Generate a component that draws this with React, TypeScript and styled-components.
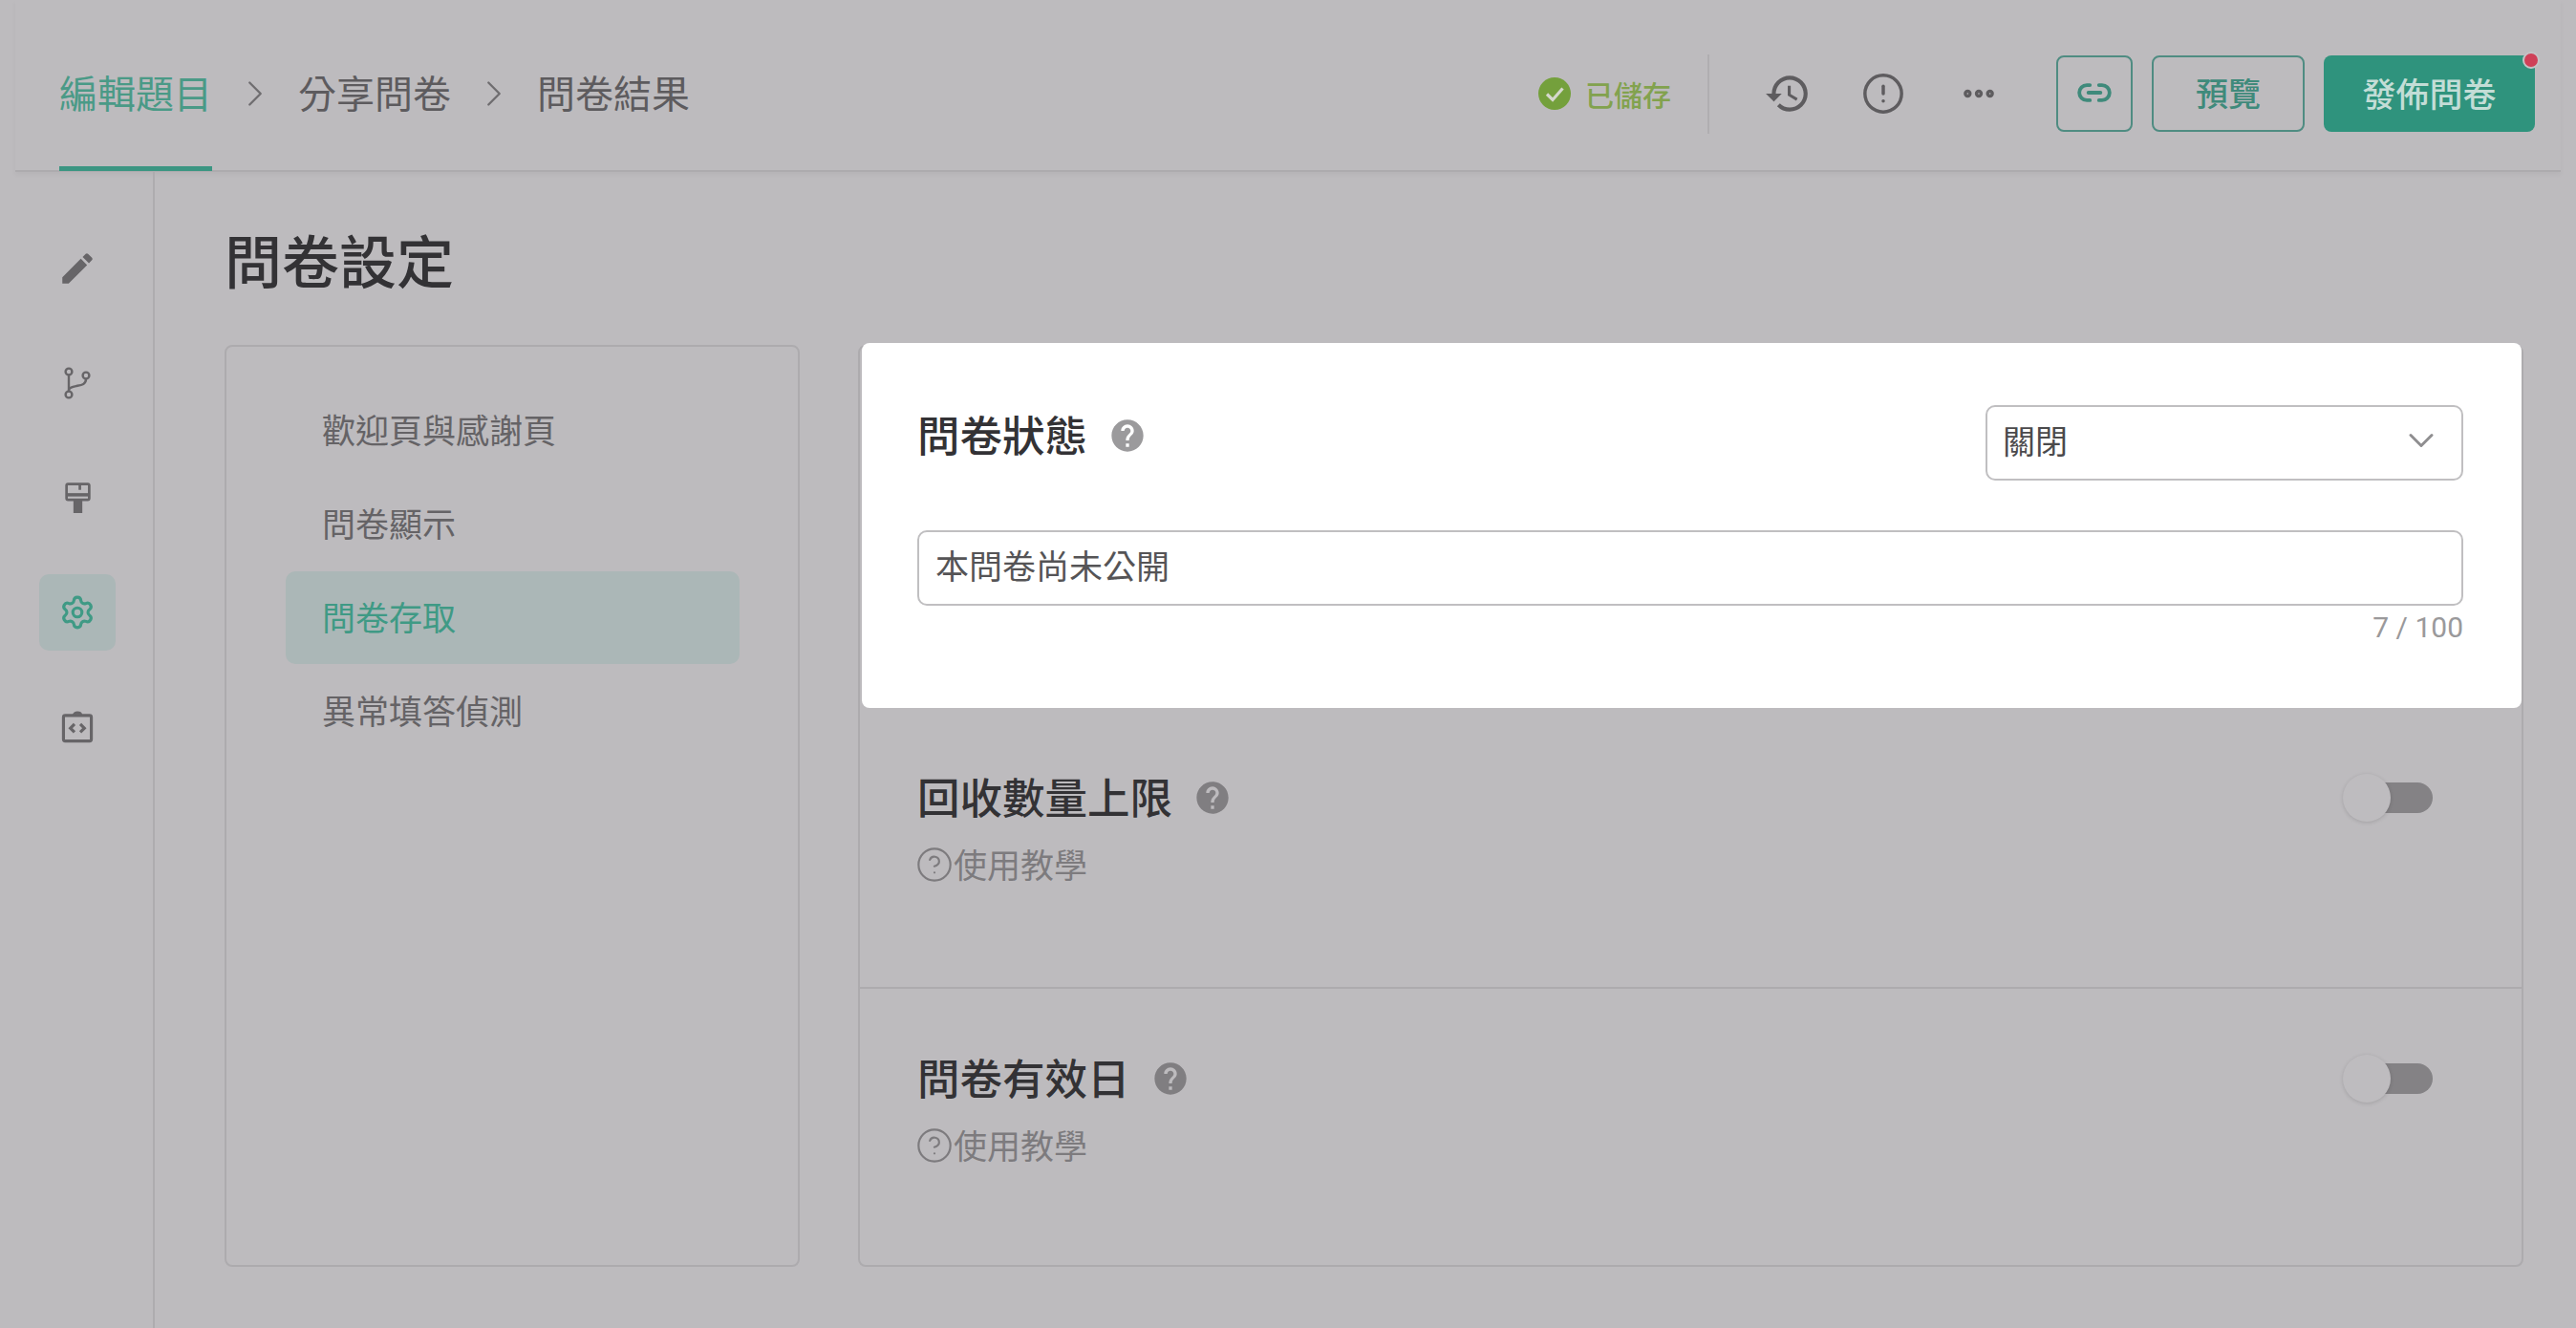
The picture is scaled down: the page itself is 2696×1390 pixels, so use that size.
import { createGlobalStyle, styled } from 'styled-components';
import { ChevronDown, ChevronRight, CircleAlert, CircleHelp, Ellipsis, Link2, Settings } from 'lucide-react';
import { MdEdit, MdHelp, MdHistory } from 'react-icons/md';

const GlobalStyle = createGlobalStyle`
  html, body {
    margin: 0;
    height: 100%;
    overflow: hidden;
    background: #bdbbbe;
    font-family: "Noto Sans CJK TC", "Noto Sans", sans-serif;
  }
  * {
    box-sizing: border-box;
  }
`;

const Page = styled.div`
  width: 2696px;
  height: 1390px;
  display: flex;
  flex-direction: column;
  color: #333235;
`;

const Header = styled.header`
  height: 180px;
  margin: 0 16px;
  padding: 18px 27px 0 46px;
  display: flex;
  align-items: center;
  justify-content: space-between;
  border-bottom: 2px solid #adabae;
  box-shadow: 0 3px 5px rgba(0, 0, 0, 0.04);
`;

const Steps = styled.nav`
  height: 100%;
  display: flex;
  align-items: center;
  font-size: 40px;
  color: #5d5b5e;
`;

const Step = styled.div<{ $active?: boolean }>`
  height: 100%;
  padding-bottom: 5px;
  display: flex;
  align-items: center;
  position: relative;
  line-height: 1;
  color: ${(p) => (p.$active ? '#4a9a87' : '#5d5b5e')};

  &::after {
    content: '';
    display: ${(p) => (p.$active ? 'block' : 'none')};
    position: absolute;
    left: 0;
    right: 0;
    bottom: -1px;
    height: 5px;
    background: #3b9582;
  }
`;

const StepArrow = styled.span`
  width: 90px;
  display: flex;
  justify-content: center;
  color: #6f6d70;
`;

const Actions = styled.div`
  display: flex;
  align-items: center;
`;

const Saved = styled.div`
  display: flex;
  align-items: center;
  gap: 14px;
  font-size: 30px;
  line-height: 1;
  font-weight: 500;
  color: #82a24e;
`;

const SavedDot = styled.svg`
  width: 36px;
  height: 36px;
  display: block;
`;

const Separator = styled.div`
  width: 2px;
  height: 83px;
  margin: 0 52px 0 38px;
  background: #b0aeb1;
`;

const Tools = styled.div`
  display: flex;
  gap: 40px;
  margin-right: 51px;
`;

const IconButton = styled.button`
  width: 60px;
  height: 60px;
  padding: 0;
  border: 0;
  display: flex;
  align-items: center;
  justify-content: center;
  background: none;
  color: #5e5c5f;
`;

const OutlineButton = styled.button<{ $width: number }>`
  width: ${(p) => p.$width}px;
  height: 80px;
  margin-right: 20px;
  padding: 0 0 3px;
  display: flex;
  align-items: center;
  justify-content: center;
  border: 2px solid #4f8c82;
  border-radius: 8px;
  background: none;
  color: #3f8a7b;
  font: 500 34px "Noto Sans CJK TC", sans-serif;
`;

const PublishButton = styled.button`
  width: 221px;
  height: 80px;
  padding: 0 0 3px;
  border: 0;
  border-radius: 8px;
  position: relative;
  background: #2f937d;
  color: #c3ddd6;
  font: 500 35px "Noto Sans CJK TC", sans-serif;
`;

const RedDot = styled.span`
  position: absolute;
  top: -4px;
  right: -5px;
  width: 18px;
  height: 18px;
  border-radius: 50%;
  border: 2px solid #c5c3c6;
  background: #cf4058;
`;

const Body = styled.div`
  flex: 1;
  display: flex;
  min-height: 0;
`;

const Rail = styled.aside`
  width: 162px;
  padding: 61px 0 0 2px;
  display: flex;
  flex-direction: column;
  align-items: center;
  gap: 40px;
  border-right: 2px solid #aeacaf;
`;

const RailItem = styled.div<{ $active?: boolean }>`
  width: 80px;
  height: 80px;
  display: flex;
  align-items: center;
  justify-content: center;
  border-radius: 10px;
  background: ${(p) => (p.$active ? '#abb7b7' : 'transparent')};
  color: ${(p) => (p.$active ? '#3f9a85' : '#676568')};
`;

const Content = styled.main`
  flex: 1;
  padding-left: 73px;
`;

const PageTitle = styled.h1`
  margin: 55px 0 54px;
  height: 72px;
  font-size: 60px;
  line-height: 72px;
  font-weight: 500;
`;

const Columns = styled.div`
  display: grid;
  grid-template-columns: 602px 1743px;
  column-gap: 61px;
  height: 965px;
`;

const SideMenu = styled.div`
  padding: 39px 62px;
  display: flex;
  flex-direction: column;
  gap: 1px;
  border: 2px solid #adabae;
  border-radius: 8px;
`;

const MenuItem = styled.div<{ $active?: boolean }>`
  width: 475px;
  height: 97px;
  padding: 0 0 5px 38px;
  display: flex;
  align-items: center;
  border-radius: 10px;
  font-size: 35px;
  line-height: 1;
  background: ${(p) => (p.$active ? '#abb7b7' : 'transparent')};
  color: ${(p) => (p.$active ? '#3f9a85' : '#656366')};
`;

const SettingsPanel = styled.div`
  display: flex;
  flex-direction: column;
  border: 2px solid #adabae;
  border-radius: 8px;
`;

const FocusCard = styled.section`
  height: 382px;
  margin: -4px 0 0 2px;
  padding: 65px 61px 0 58px;
  border-radius: 8px;
  background: #fff;
`;

const CardTop = styled.div`
  display: flex;
  justify-content: space-between;
  margin-bottom: 52px;
`;

const Heading = styled.div`
  height: 60px;
  display: flex;
  align-items: center;
  gap: 22px;
  font-size: 44.5px;
  line-height: 60px;
  font-weight: 500;
`;

const HelpMark = styled(MdHelp)<{ $bright?: boolean }>`
  width: 40px;
  height: 40px;
  margin-top: 4px;
  color: ${(p) => (p.$bright ? '#9b9a9c' : '#807e81')};
`;

const SelectBox = styled.div`
  width: 500px;
  height: 79px;
  padding: 0 20px 6px 16px;
  display: flex;
  align-items: center;
  justify-content: space-between;
  border: 2px solid #c0bfc1;
  border-radius: 10px;
  font-size: 34px;
  color: #4b4a4c;
`;

const TextBox = styled.div`
  height: 79px;
  padding: 0 0 8px 17px;
  display: flex;
  align-items: center;
  border: 2px solid #c0bfc1;
  border-radius: 10px;
  font-size: 35px;
  color: #555456;
`;

const Counter = styled.div`
  margin-top: 5px;
  text-align: right;
  font-family: Roboto, "Noto Sans", sans-serif;
  font-size: 30px;
  line-height: 36px;
  color: #9a999b;
`;

const Section = styled.section<{ $grow?: boolean }>`
  height: ${(p) => (p.$grow ? 'auto' : '294px')};
  flex: ${(p) => (p.$grow ? 1 : 'none')};
  padding: 62px 93px 0 60px;
  display: flex;
  justify-content: space-between;
  align-items: flex-start;
  border-bottom: ${(p) => (p.$grow ? '0' : '2px solid #adabae')};
`;

const Tutorial = styled.div`
  margin-top: 20px;
  height: 40px;
  display: flex;
  align-items: center;
  font-size: 35px;
  line-height: 1;
  color: #7d7b7e;

  svg {
    margin: 3px 0 0 -2px;
  }
`;

const Toggle = styled.div`
  width: 94px;
  height: 50px;
  margin-top: 7px;
  position: relative;

  &::before {
    content: '';
    position: absolute;
    left: 4px;
    right: 0;
    top: 9px;
    height: 32px;
    border-radius: 16px;
    background: #848285;
  }

  &::after {
    content: '';
    position: absolute;
    left: 0;
    top: 0;
    width: 50px;
    height: 50px;
    border-radius: 50%;
    background: #bebcbf;
    box-shadow: 0 1px 4px rgba(0, 0, 0, 0.14);
  }
`;

function BranchIcon() {
  return (
    <svg width="32" height="38" viewBox="0 0 32 36" fill="none" stroke="currentColor" strokeWidth="2.4">
      <circle cx="7" cy="6" r="3.4" />
      <circle cx="7" cy="30" r="3.4" />
      <circle cx="25" cy="10" r="3.4" />
      <path d="M7 9.5v17" />
      <path d="M25 13.5c0 6-5 6.5-10 7.5-4 .8-8 1.5-8 4.5" />
    </svg>
  );
}

function PaintIcon() {
  return (
    <svg width="27" height="32" viewBox="0 0 26 31" fill="none" stroke="currentColor" strokeWidth="2.6">
      <rect x="1.5" y="1.5" width="23" height="16" rx="1.5" />
      <path d="M1.5 12.5h23" strokeWidth="3.4" />
      <path d="M15 1.5v6" />
      <rect x="8.5" y="18" width="9" height="13" fill="currentColor" stroke="none" />
    </svg>
  );
}

function CodeIcon() {
  return (
    <svg width="34" height="34" viewBox="0 0 28 28" fill="none" stroke="currentColor" strokeWidth="2.6">
      <rect x="2" y="4" width="24" height="22" rx="1.5" />
      <path d="M11 4c0-3 6-3 6 0" />
      <path d="M11.5 11.5 8 15l3.5 3.5M16.5 11.5 20 15l-3.5 3.5" />
    </svg>
  );
}

function SettingBlock({ title, grow }: { title: string; grow?: boolean }) {
  return (
    <Section $grow={grow}>
      <div>
        <Heading>
          {title}
          <HelpMark />
        </Heading>
        <Tutorial>
          <CircleHelp size={40} strokeWidth={1.3} />
          使用教學
        </Tutorial>
      </div>
      <Toggle />
    </Section>
  );
}

export default function App() {
  return (
    <Page>
      <GlobalStyle />
      <Header>
        <Steps>
          <Step $active>編輯題目</Step>
          <StepArrow>
            <ChevronRight size={46} strokeWidth={1.2} />
          </StepArrow>
          <Step>分享問卷</Step>
          <StepArrow>
            <ChevronRight size={46} strokeWidth={1.2} />
          </StepArrow>
          <Step>問卷結果</Step>
        </Steps>
        <Actions>
          <Saved>
            <SavedDot viewBox="0 0 36 36">
              <circle cx="18" cy="18" r="17" fill="#74a03c" />
              <path d="M10 18.5l6 6 10.5-12" fill="none" stroke="#d5d8cc" strokeWidth="3.2" />
            </SavedDot>
            已儲存
          </Saved>
          <Separator />
          <Tools>
            <IconButton>
              <MdHistory size={50} />
            </IconButton>
            <IconButton>
              <CircleAlert size={46} strokeWidth={1.8} />
            </IconButton>
            <IconButton>
              <Ellipsis size={40} strokeWidth={3} />
            </IconButton>
          </Tools>
          <OutlineButton $width={80}>
            <Link2 size={38} strokeWidth={2.4} />
          </OutlineButton>
          <OutlineButton $width={160}>預覽</OutlineButton>
          <PublishButton>
            發佈問卷
            <RedDot />
          </PublishButton>
        </Actions>
      </Header>
      <Body>
        <Rail>
          <RailItem>
            <MdEdit size={42} />
          </RailItem>
          <RailItem>
            <BranchIcon />
          </RailItem>
          <RailItem>
            <PaintIcon />
          </RailItem>
          <RailItem $active>
            <Settings size={38} strokeWidth={2} />
          </RailItem>
          <RailItem>
            <CodeIcon />
          </RailItem>
        </Rail>
        <Content>
          <PageTitle>問卷設定</PageTitle>
          <Columns>
            <SideMenu>
              <MenuItem>歡迎頁與感謝頁</MenuItem>
              <MenuItem>問卷顯示</MenuItem>
              <MenuItem $active>問卷存取</MenuItem>
              <MenuItem>異常填答偵測</MenuItem>
            </SideMenu>
            <SettingsPanel>
              <FocusCard>
                <CardTop>
                  <Heading>
                    問卷狀態
                    <HelpMark $bright />
                  </Heading>
                  <SelectBox>
                    關閉
                    <ChevronDown size={44} strokeWidth={1.6} color="#8f8e90" />
                  </SelectBox>
                </CardTop>
                <TextBox>本問卷尚未公開</TextBox>
                <Counter>7 / 100</Counter>
              </FocusCard>
              <SettingBlock title="回收數量上限" />
              <SettingBlock title="問卷有效日" grow />
            </SettingsPanel>
          </Columns>
        </Content>
      </Body>
    </Page>
  );
}
